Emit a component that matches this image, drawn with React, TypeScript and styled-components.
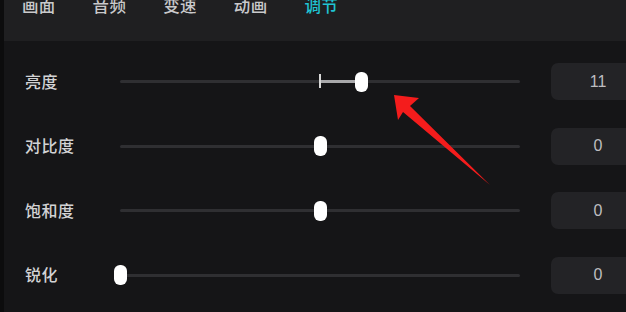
import React from 'react'
import styled, { createGlobalStyle } from 'styled-components'

const GlobalStyle = createGlobalStyle`
  html, body {
    margin: 0;
    padding: 0;
    background: #151517;
  }
  body {
    font-family: 'Noto Sans CJK SC', 'Noto Sans', sans-serif;
  }
`

const TABS = ['画面', '音频', '变速', '动画', '调节']
const ACTIVE_TAB = '调节'

const ADJUSTMENTS = [
  { label: '亮度', value: 11, centered: true },
  { label: '对比度', value: 0, centered: true },
  { label: '饱和度', value: 0, centered: true },
  { label: '锐化', value: 0, centered: false }
]

const TRACK_WIDTH = 400

const Page = styled.div`
  position: relative;
  width: 626px;
  height: 312px;
  overflow: hidden;
  background: #151517;
  border-left: 4px solid #0c0c0d;
  box-sizing: border-box;
`

const TabBar = styled.div`
  height: 41px;
  background: #1f1f21;
  display: flex;
  align-items: flex-start;
  gap: 37px;
  padding-left: 18px;
`

const Tab = styled.div<{ $active?: boolean }>`
  margin-top: -6px;
  font-size: 16.5px;
  line-height: 22px;
  font-weight: 500;
  letter-spacing: 0.3px;
  color: ${(p) => (p.$active ? '#1fc3d2' : '#c9c9cb')};
`

const Body = styled.div`
  display: flex;
  flex-direction: column;
  gap: 27.5px;
  padding-top: 22px;
`

const Row = styled.div`
  display: grid;
  grid-template-columns: 64px ${TRACK_WIDTH}px 94px;
  column-gap: 31px;
  align-items: center;
  height: 37px;
  padding-left: 21px;
`

const Label = styled.div`
  margin-top: -2px;
  font-size: 16px;
  color: #d2d2d4;
  font-weight: 500;
  letter-spacing: 0.5px;
  white-space: nowrap;
`

const Track = styled.div`
  position: relative;
  height: 3px;
  background: #2f2f32;
  border-radius: 2px;
`

const Fill = styled.div`
  position: absolute;
  top: 0;
  height: 3px;
  background: #a9a9ab;
`

const Tick = styled.div`
  position: absolute;
  top: -6px;
  width: 1.5px;
  height: 14px;
  background: #d8d8d8;
`

const Thumb = styled.div`
  position: absolute;
  top: -8.5px;
  width: 13px;
  height: 20px;
  margin-left: -6.5px;
  border-radius: 6px;
  background: #ffffff;
`

const ValueBox = styled.div`
  height: 37px;
  border-radius: 7px;
  background: #232326;
  display: flex;
  align-items: center;
  justify-content: center;
  font-family: 'Liberation Sans', 'Noto Sans', sans-serif;
  font-size: 16px;
  color: #bdbdc0;
`

const Overlay = styled.svg`
  position: absolute;
  left: -4px;
  top: 0;
  pointer-events: none;
`

function Slider({ value, centered }: { value: number; centered: boolean }) {
  const origin = centered ? TRACK_WIDTH / 2 : 0
  const pos = origin + value * 3.8
  return (
    <Track>
      {centered && value !== 0 && (
        <>
          <Fill style={{ left: Math.min(origin, pos), width: Math.abs(pos - origin) }} />
          <Tick style={{ left: origin - 0.75 }} />
        </>
      )}
      <Thumb style={{ left: pos }} />
    </Track>
  )
}

export default function App() {
  return (
    <Page>
      <GlobalStyle />
      <TabBar>
        {TABS.map((tab) => (
          <Tab key={tab} $active={tab === ACTIVE_TAB}>
            {tab}
          </Tab>
        ))}
      </TabBar>
      <Body>
        {ADJUSTMENTS.map((item) => (
          <Row key={item.label}>
            <Label>{item.label}</Label>
            <Slider value={item.value} centered={item.centered} />
            <ValueBox>{item.value}</ValueBox>
          </Row>
        ))}
      </Body>
      <Overlay width="626" height="312" viewBox="0 0 626 312">
        <polygon
          points="394,95 419,98 410,106 490,185 403,112 398,120"
          fill="#f41c1c"
        />
      </Overlay>
    </Page>
  )
}
